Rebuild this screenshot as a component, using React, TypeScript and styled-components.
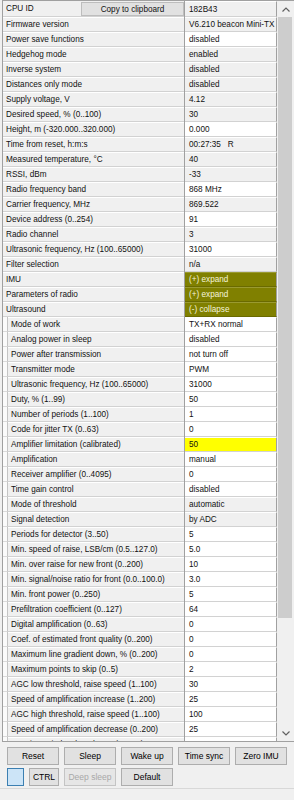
import React from "react";
import styled, { createGlobalStyle } from "styled-components";

const GlobalStyle = createGlobalStyle`
  html, body { margin: 0; padding: 0; background: #f0f0f0; }
  body { font-family: "Liberation Sans", Arial, sans-serif; font-size: 8.2px; color: #000; }
  * { box-sizing: border-box; }
`;

type Bg = "gray" | "white" | "olive" | "yellow";
interface RowData { name: string; value: string; bg: Bg; indent?: boolean; }

const rows: RowData[] = [
  { name: "Firmware version", value: "V6.210 beacon Mini-TX", bg: "gray" },
  { name: "Power save functions", value: "disabled", bg: "white" },
  { name: "Hedgehog mode", value: "enabled", bg: "gray" },
  { name: "Inverse system", value: "disabled", bg: "gray" },
  { name: "Distances only mode", value: "disabled", bg: "gray" },
  { name: "Supply voltage, V", value: "4.12", bg: "gray" },
  { name: "Desired speed, % (0..100)", value: "30", bg: "gray" },
  { name: "Height, m (-320.000..320.000)", value: "0.000", bg: "white" },
  { name: "Time from reset, h:m:s", value: "00:27:35   R", bg: "gray" },
  { name: "Measured temperature, \u00B0C", value: "40", bg: "gray" },
  { name: "RSSI, dBm", value: "-33", bg: "gray" },
  { name: "Radio frequency band", value: "868 MHz", bg: "white" },
  { name: "Carrier frequency, MHz", value: "869.522", bg: "gray" },
  { name: "Device address (0..254)", value: "91", bg: "white" },
  { name: "Radio channel", value: "3", bg: "gray" },
  { name: "Ultrasonic frequency, Hz (100..65000)", value: "31000", bg: "white" },
  { name: "Filter selection", value: "n/a", bg: "gray" },
  { name: "IMU", value: "(+) expand", bg: "olive" },
  { name: "Parameters of radio", value: "(+) expand", bg: "olive" },
  { name: "Ultrasound", value: "(-) collapse", bg: "olive" },
  { name: "Mode of work", value: "TX+RX normal", bg: "white", indent: true },
  { name: "Analog power in sleep", value: "disabled", bg: "white", indent: true },
  { name: "Power after transmission", value: "not turn off", bg: "white", indent: true },
  { name: "Transmitter mode", value: "PWM", bg: "white", indent: true },
  { name: "Ultrasonic frequency, Hz (100..65000)", value: "31000", bg: "white", indent: true },
  { name: "Duty, % (1..99)", value: "50", bg: "white", indent: true },
  { name: "Number of periods (1..100)", value: "1", bg: "white", indent: true },
  { name: "Code for jitter TX (0..63)", value: "0", bg: "white", indent: true },
  { name: "Amplifier limitation (calibrated)", value: "50", bg: "yellow", indent: true },
  { name: "Amplification", value: "manual", bg: "white", indent: true },
  { name: "Receiver amplifier (0..4095)", value: "0", bg: "white", indent: true },
  { name: "Time gain control", value: "disabled", bg: "white", indent: true },
  { name: "Mode of threshold", value: "automatic", bg: "gray", indent: true },
  { name: "Signal detection", value: "by ADC", bg: "gray", indent: true },
  { name: "Periods for detector (3..50)", value: "5", bg: "white", indent: true },
  { name: "Min. speed of raise, LSB/cm (0.5..127.0)", value: "5.0", bg: "white", indent: true },
  { name: "Min. over raise for new front (0..200)", value: "10", bg: "white", indent: true },
  { name: "Min. signal/noise ratio for front (0.0..100.0)", value: "3.0", bg: "white", indent: true },
  { name: "Min. front power (0..250)", value: "5", bg: "white", indent: true },
  { name: "Prefiltration coefficient (0..127)", value: "64", bg: "white", indent: true },
  { name: "Digital amplification (0..63)", value: "0", bg: "white", indent: true },
  { name: "Coef. of estimated front quality (0..200)", value: "0", bg: "white", indent: true },
  { name: "Maximum line gradient down, % (0..200)", value: "0", bg: "white", indent: true },
  { name: "Maximum points to skip (0..5)", value: "2", bg: "white", indent: true },
  { name: "AGC low threshold, raise speed (1..100)", value: "30", bg: "white", indent: true },
  { name: "Speed of amplification increase (1..200)", value: "25", bg: "white", indent: true },
  { name: "AGC high threshold, raise speed (1..100)", value: "100", bg: "white", indent: true },
  { name: "Speed of amplification decrease (0..200)", value: "25", bg: "white", indent: true },
  { name: "Receiver window length, ms (0..255)", value: "0", bg: "white", indent: true },
];

const bgColor: Record<Bg, string> = {
  gray: "#f0f0f0",
  white: "#ffffff",
  olive: "#808000",
  yellow: "#ffff00",
};

const Page = styled.div`
  width: 294px;
  height: 800px;
  display: flex;
  flex-direction: column;
  background: #f0f0f0;
  overflow: hidden;
`;

const Frame = styled.div`
  margin-left: 2px;
  height: 742px;
  display: flex;
  border-top: 1px solid #a0a0a0;
  border-left: 1px solid #a0a0a0;
  border-bottom: 1px solid #a0a0a0;
  background: #f0f0f0;
`;

const Body = styled.div`
  width: 274px;
  display: flex;
  flex-direction: column;
  overflow: hidden;
`;

const Row = styled.div<{ $first?: boolean }>`
  display: flex;
  flex: none;
  height: ${(p) => (p.$first ? 16 : 15)}px;
`;

const NameCell = styled.div`
  width: 182px;
  display: flex;
  align-items: stretch;
  border-right: 1px solid #a0a0a0;
  background: #f0f0f0;
`;

const IndentStrip = styled.div`
  width: 5px;
  flex: none;
  background: #fbfbfb;
  border-right: 1px solid #c4c4c4;
  border-bottom: 1px solid #dadada;
`;

const NameText = styled.div`
  flex: 1;
  min-width: 0;
  display: flex;
  align-items: center;
  padding-left: 3px;
  white-space: nowrap;
  overflow: hidden;
  color: #111;
  border-top: 1px solid #ffffff;
  border-bottom: 1px solid #d2d2d2;
`;

const ValueCell = styled.div<{ $bg: Bg }>`
  width: 92px;
  display: flex;
  align-items: center;
  padding-left: 4px;
  white-space: pre;
  overflow: hidden;
  border-right: 1px solid #a0a0a0;
  border-top: 1px solid ${(p) => (p.$bg === "olive" ? "#9a9a30" : "#ffffff")};
  border-bottom: 1px solid ${(p) => (p.$bg === "olive" ? "#6a6a00" : "#d2d2d2")};
  background: ${(p) => bgColor[p.$bg]};
  color: ${(p) => (p.$bg === "olive" ? "#f4f4dc" : "#111")};
`;

const CopyButton = styled.div`
  margin-left: auto;
  width: 103px;
  height: 14px;
  margin-top: 1px;
  display: flex;
  align-items: center;
  justify-content: center;
  background: #e1e1e1;
  border: 1px solid #bdbdbd;
  font-size: 8.2px;
`;

const FirstName = styled.div`
  flex: 1;
  display: flex;
  align-items: center;
  padding-left: 3px;
  color: #111;
  border-bottom: 1px solid #d2d2d2;
`;

const Scrollbar = styled.div`
  width: 17px;
  display: flex;
  flex-direction: column;
  background: #f0f0f0;
`;

const ArrowBox = styled.div`
  height: 16px;
  flex: none;
  display: flex;
  align-items: center;
  justify-content: center;
  background: #f0f0f0;
`;

const Thumb = styled.div`
  height: 601px;
  margin: 0 2px 0 1px;
  background: #cdcdcd;
  flex: none;
`;

const Track = styled.div`
  flex: 1;
`;

const Panel = styled.div`
  flex: 1;
  display: flex;
  flex-direction: column;
  gap: 3px;
  padding: 5px 0 0 7px;
  border-bottom: 1px solid #d8d8d8;
`;

const ButtonRow = styled.div`
  display: flex;
  gap: 5px;
`;

const Button = styled.div<{ $w?: number; $disabled?: boolean }>`
  width: ${(p) => p.$w ?? 52}px;
  height: 18px;
  display: flex;
  align-items: center;
  justify-content: center;
  background: ${(p) => (p.$disabled ? "#e6e6e6" : "#e1e1e1")};
  border: 1px solid ${(p) => (p.$disabled ? "#c4c4c4" : "#adadad")};
  color: ${(p) => (p.$disabled ? "#a8a8a8" : "#000")};
  font-size: 8.5px;
`;

const ToggleSquare = styled.div`
  width: 17px;
  height: 18px;
  background: #cce4f7;
  border: 1px solid #3c7fb1;
`;

const Footer = styled.div`
  height: 11px;
  flex: none;
  background: #f0f0f0;
`;

const Chevron = ({ up }: { up: boolean }) => (
  <svg width="8" height="5" viewBox="0 0 8 5">
    <polyline
      points={up ? "0.5,4.5 4,1 7.5,4.5" : "0.5,0.5 4,4 7.5,0.5"}
      fill="none"
      stroke="#606060"
      strokeWidth="1.2"
    />
  </svg>
);

export default function App() {
  return (
    <Page>
      <GlobalStyle />
      <Frame>
        <Body>
          <Row $first>
            <NameCell>
              <FirstName>
                CPU ID
                <CopyButton>Copy to clipboard</CopyButton>
              </FirstName>
            </NameCell>
            <ValueCell $bg="gray">182B43</ValueCell>
          </Row>
          {rows.map((r, i) => (
            <Row key={i}>
              <NameCell>
                {r.indent && <IndentStrip />}
                <NameText>{r.name}</NameText>
              </NameCell>
              <ValueCell $bg={r.bg}>{r.value}</ValueCell>
            </Row>
          ))}
        </Body>
        <Scrollbar>
          <ArrowBox>
            <Chevron up />
          </ArrowBox>
          <Thumb />
          <Track />
          <ArrowBox>
            <Chevron up={false} />
          </ArrowBox>
        </Scrollbar>
      </Frame>
      <Panel>
        <ButtonRow>
          <Button>Reset</Button>
          <Button>Sleep</Button>
          <Button>Wake up</Button>
          <Button>Time sync</Button>
          <Button>Zero IMU</Button>
        </ButtonRow>
        <ButtonRow>
          <ToggleSquare />
          <Button $w={30}>CTRL</Button>
          <Button $disabled>Deep sleep</Button>
          <Button>Default</Button>
        </ButtonRow>
      </Panel>
      <Footer />
    </Page>
  );
}
